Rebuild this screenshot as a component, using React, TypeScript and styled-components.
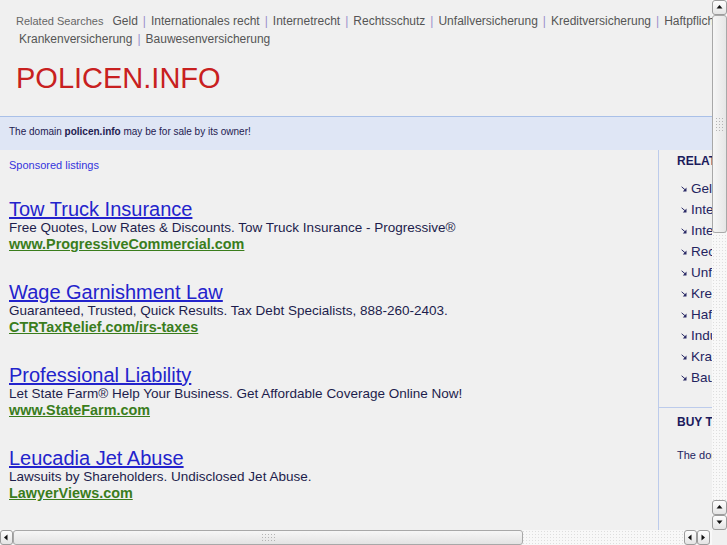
import React from 'react';
import styled, { createGlobalStyle } from 'styled-components';

const GlobalStyle = createGlobalStyle`
  html, body {
    margin: 0;
    padding: 0;
    background: #f0f0f0;
  }
  body {
    font-family: "Liberation Sans", Arial, sans-serif;
    overflow: hidden;
  }
  * {
    box-sizing: border-box;
  }
`;

const Frame = styled.div`
  width: 727px;
  height: 545px;
  display: grid;
  grid-template-columns: 712px 15px;
  grid-template-rows: 530px 15px;
  overflow: hidden;
`;

const Viewport = styled.div`
  overflow: hidden;
  background: #f0f0f0;
`;

const Page = styled.div`
  width: 934px;
`;

const Header = styled.div`
  padding: 12px 0 0 16px;
`;

const SearchLine = styled.div`
  white-space: nowrap;
  font-size: 12px;
  line-height: 18px;
  color: #555;
`;

const SearchLabel = styled.span`
  font-size: 11px;
  color: #666;
  margin-right: 6px;
`;

const SearchLink = styled.a`
  padding: 0 3px;
  color: #555;
  text-decoration: none;
`;

const Sep = styled.span`
  padding: 0 2px;
  color: #9a90cc;
`;

const Logo = styled.h1`
  margin: 14px 0 0;
  font-size: 29px;
  line-height: 32px;
  font-weight: 400;
  color: #c82020;
`;

const DomainBar = styled.div`
  margin-top: 22px;
  height: 34px;
  border-top: 1px solid #a9c0e8;
  background: #dfe6f5;
  padding: 8px 0 0 9px;
  font-size: 10px;
  line-height: 14px;
  color: #1e2050;
  b {
    font-weight: 700;
  }
`;

const Columns = styled.div`
  display: flex;
  align-items: stretch;
`;

const Main = styled.div`
  width: 658px;
  flex: none;
  padding: 8px 0 0 9px;
`;

const Sponsored = styled.div`
  font-size: 11px;
  line-height: 14px;
  color: #3434dd;
`;

const AdList = styled.div`
  margin-top: 27px;
`;

const Ad = styled.div`
  padding-bottom: 29px;
`;

const AdTitle = styled.a`
  display: block;
  font-size: 20px;
  line-height: 20px;
  color: #2323cc;
  text-decoration: underline;
`;

const AdDesc = styled.div`
  font-size: 13.5px;
  line-height: 17px;
  color: #1d1d4c;
`;

const AdUrl = styled.a`
  display: block;
  font-size: 14.4px;
  line-height: 17px;
  font-weight: 700;
  color: #3a7d1c;
  text-decoration: underline;
`;

const Sidebar = styled.div`
  flex: 1;
  min-height: 1040px;
  border-left: 1px solid #bccbeb;
`;

const SideSection = styled.div<{ $top?: boolean }>`
  padding: ${({ $top }) => ($top ? '4px 0 19px 18px' : '7px 0 19px 18px')};
  border-top: ${({ $top }) => ($top ? 'none' : '1px solid #bccbeb')};
`;

const SideHeading = styled.div`
  font-size: 12px;
  line-height: 14px;
  font-weight: 700;
  color: #1b1b5c;
`;

const SideList = styled.ul`
  list-style: none;
  margin: 10px 0 0;
  padding: 0;
`;

const SideItem = styled.li`
  display: flex;
  align-items: center;
  gap: 4px;
  padding-left: 4px;
  height: 21px;
  font-size: 13.5px;
  color: #23235f;
  white-space: nowrap;
`;

const SideText = styled.div`
  margin-top: 19px;
  font-size: 11px;
  line-height: 14px;
  color: #23235f;
  white-space: nowrap;
`;

const track = `
  background-color: #f8f8f8;
  background-image: radial-gradient(#dedede 0.7px, transparent 0.8px);
  background-size: 3px 3px;
`;

const VScroll = styled.div`
  display: flex;
  flex-direction: column;
  ${track}
`;

const HScroll = styled.div`
  display: flex;
  padding-right: 2px;
  ${track}
`;

const Corner = styled.div`
  background: #f0f0f0;
`;

const Btn = styled.div`
  flex: none;
  width: 15px;
  height: 15px;
  border: 1px solid #9c9c9c;
  border-radius: 3px;
  background: linear-gradient(#fefefe, #e4e4e4);
  display: flex;
  align-items: center;
  justify-content: center;
`;

const HBtn = styled(Btn)`
  width: 13px;
`;

const Track = styled.div`
  flex: 1;
`;

const Thumb = styled.div<{ $vertical?: boolean }>`
  flex: none;
  width: ${({ $vertical }) => ($vertical ? '15px' : '510px')};
  height: ${({ $vertical }) => ($vertical ? '218px' : '15px')};
  border: 1px solid #a8a8a8;
  border-radius: 3px;
  background: ${({ $vertical }) =>
    $vertical
      ? 'linear-gradient(to right, #f6f6f6, #e6e6e6)'
      : 'linear-gradient(#f6f6f6, #e3e3e3)'};
  display: flex;
  align-items: center;
  justify-content: center;
`;

const Grip = styled.div<{ $vertical?: boolean }>`
  width: ${({ $vertical }) => ($vertical ? '9px' : '15px')};
  height: ${({ $vertical }) => ($vertical ? '15px' : '9px')};
  background-image: radial-gradient(#b4b4b4 0.8px, transparent 0.9px);
  background-size: 3px 3px;
`;

type Dir = 'up' | 'down' | 'left' | 'right';

const Arrow = ({ dir }: { dir: Dir }) => {
  const pts: Record<Dir, string> = {
    up: '0.5,4.5 3.5,1 6.5,4.5',
    down: '0.5,1.5 3.5,5 6.5,1.5',
    left: '4.5,0.5 1,3.5 4.5,6.5',
    right: '1.5,0.5 5,3.5 1.5,6.5',
  };
  return (
    <svg width="7" height="7" viewBox="0 0 7 7">
      <polygon points={pts[dir]} fill="#111" />
    </svg>
  );
};

const ItemArrow = () => (
  <svg width="6" height="6" viewBox="0 0 6 6">
    <path d="M0.6 0.8 L4.6 4.2" stroke="#2a2a66" strokeWidth="1" />
    <polygon points="5.5,1.6 5.5,5.4 1.8,5.4" fill="#2a2a66" />
  </svg>
);

const searches = [
  'Geld',
  'Internationales recht',
  'Internetrecht',
  'Rechtsschutz',
  'Unfallversicherung',
  'Kreditversicherung',
  'Haftpflichtversicherung',
  'Industrieversicherung',
  'Krankenversicherung',
  'Bauwesenversicherung',
];

const ads = [
  {
    title: 'Tow Truck Insurance',
    desc: 'Free Quotes, Low Rates & Discounts. Tow Truck Insurance - Progressive®',
    url: 'www.ProgressiveCommercial.com',
  },
  {
    title: 'Wage Garnishment Law',
    desc: 'Guaranteed, Trusted, Quick Results. Tax Debt Specialists, 888-260-2403.',
    url: 'CTRTaxRelief.com/irs-taxes',
  },
  {
    title: 'Professional Liability',
    desc: 'Let State Farm® Help Your Business. Get Affordable Coverage Online Now!',
    url: 'www.StateFarm.com',
  },
  {
    title: 'Leucadia Jet Abuse',
    desc: 'Lawsuits by Shareholders. Undisclosed Jet Abuse.',
    url: 'LawyerViews.com',
  },
  {
    title: 'Business Liability Insurance',
    desc: 'Compare Quotes From Top Carriers. Fast, Free & Easy Online Quotes.',
    url: 'www.InsureMe.com',
  },
];

const renderLinks = (items: string[], trailingSep: boolean) =>
  items.map((s, i) => (
    <React.Fragment key={s}>
      <SearchLink href="#">{s}</SearchLink>
      {(i < items.length - 1 || trailingSep) && <Sep>|</Sep>}
    </React.Fragment>
  ));

const App = (): JSX.Element => {
  return (
    <>
      <GlobalStyle />
      <Frame>
        <Viewport>
          <Page>
            <Header>
              <SearchLine>
                <SearchLabel>Related Searches</SearchLabel>
                {renderLinks(searches.slice(0, 8), true)}
              </SearchLine>
              <SearchLine>{renderLinks(searches.slice(8), false)}</SearchLine>
              <Logo>POLICEN.INFO</Logo>
            </Header>
            <DomainBar>
              The domain <b>policen.info</b> may be for sale by its owner!
            </DomainBar>
            <Columns>
              <Main>
                <Sponsored>Sponsored listings</Sponsored>
                <AdList>
                  {ads.map((ad) => (
                    <Ad key={ad.title}>
                      <AdTitle href="#">{ad.title}</AdTitle>
                      <AdDesc>{ad.desc}</AdDesc>
                      <AdUrl href="#">{ad.url}</AdUrl>
                    </Ad>
                  ))}
                </AdList>
              </Main>
              <Sidebar>
                <SideSection $top>
                  <SideHeading>RELATED LINKS</SideHeading>
                  <SideList>
                    {searches.map((s) => (
                      <SideItem key={s}>
                        <ItemArrow />
                        {s}
                      </SideItem>
                    ))}
                  </SideList>
                </SideSection>
                <SideSection>
                  <SideHeading>BUY THIS DOMAIN</SideHeading>
                  <SideText>
                    The domain policen.info may be for sale by its owner!
                  </SideText>
                </SideSection>
              </Sidebar>
            </Columns>
          </Page>
        </Viewport>
        <VScroll>
          <Btn>
            <Arrow dir="up" />
          </Btn>
          <Thumb $vertical>
            <Grip $vertical />
          </Thumb>
          <Track />
          <Btn>
            <Arrow dir="up" />
          </Btn>
          <Btn>
            <Arrow dir="down" />
          </Btn>
        </VScroll>
        <HScroll>
          <HBtn>
            <Arrow dir="left" />
          </HBtn>
          <Thumb>
            <Grip />
          </Thumb>
          <Track />
          <HBtn>
            <Arrow dir="left" />
          </HBtn>
          <HBtn>
            <Arrow dir="right" />
          </HBtn>
        </HScroll>
        <Corner />
      </Frame>
    </>
  );
};

export default App;
